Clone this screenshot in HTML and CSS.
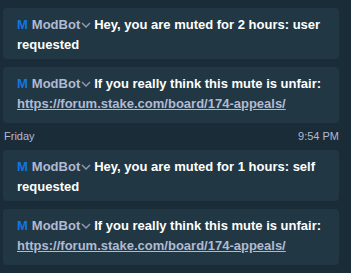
FILE: index.html
```html
<!DOCTYPE html>
<html>
<head>
<meta charset="utf-8">
<link rel="stylesheet" href="styles.css">
</head>
<body>
<div class="list">
  <div class="card">
    <span class="badge">M</span><span class="name">ModBot</span><svg class="chev" width="10" height="6" viewBox="0 0 10 6"><path d="M1 1 L5 5 L9 1" fill="none" stroke="#8c97b3" stroke-width="1.5"/></svg>Hey, you are muted for 2 hours: user requested
  </div>
  <div class="card link-card">
    <span class="badge">M</span><span class="name">ModBot</span><svg class="chev" width="10" height="6" viewBox="0 0 10 6"><path d="M1 1 L5 5 L9 1" fill="none" stroke="#8c97b3" stroke-width="1.5"/></svg>If you really think this mute is unfair: <a class="link" href="#">https://forum.stake.com/board/174-appeals/</a>
  </div>
  <div class="date-row">
    <span>Friday</span>
    <span>9:54 PM</span>
  </div>
  <div class="card">
    <span class="badge">M</span><span class="name">ModBot</span><svg class="chev" width="10" height="6" viewBox="0 0 10 6"><path d="M1 1 L5 5 L9 1" fill="none" stroke="#8c97b3" stroke-width="1.5"/></svg>Hey, you are muted for 1 hours: self requested
  </div>
  <div class="card link-card">
    <span class="badge">M</span><span class="name">ModBot</span><svg class="chev" width="10" height="6" viewBox="0 0 10 6"><path d="M1 1 L5 5 L9 1" fill="none" stroke="#8c97b3" stroke-width="1.5"/></svg>If you really think this mute is unfair: <a class="link" href="#">https://forum.stake.com/board/174-appeals/</a>
  </div>
</div>
</body>
</html>
```
FILE: styles.css
```css
html, body {
  margin: 0;
  padding: 0;
  background: #1a2c38;
  width: 351px;
  height: 273px;
  overflow: hidden;
}
body {
  font-family: "Liberation Sans", Arial, sans-serif;
}
.list {
  display: flex;
  flex-direction: column;
  gap: 8px;
  padding: 8px 12px 0 3px;
}
.card {
  background: #213743;
  border-radius: 4px;
  padding: 7px 13px 4px 14px;
  font-size: 13px;
  line-height: 20px;
  font-weight: 700;
  color: #ffffff;
}
.link-card {
  padding-bottom: 9px;
}
.badge {
  color: #1475e1;
  margin-right: 4px;
}
.name {
  color: #b1bad3;
}
.chev {
  margin-left: 1px;
  margin-right: 3px;
  vertical-align: 1px;
}
.link {
  display: inline-block;
  color: #b1bad3;
  text-decoration: underline;
}
.date-row {
  display: flex;
  justify-content: space-between;
  font-size: 11px;
  line-height: 11px;
  height: 11px;
  color: #b1bad3;
  font-weight: 400;
  padding: 0 0 0 1px;
}
```
